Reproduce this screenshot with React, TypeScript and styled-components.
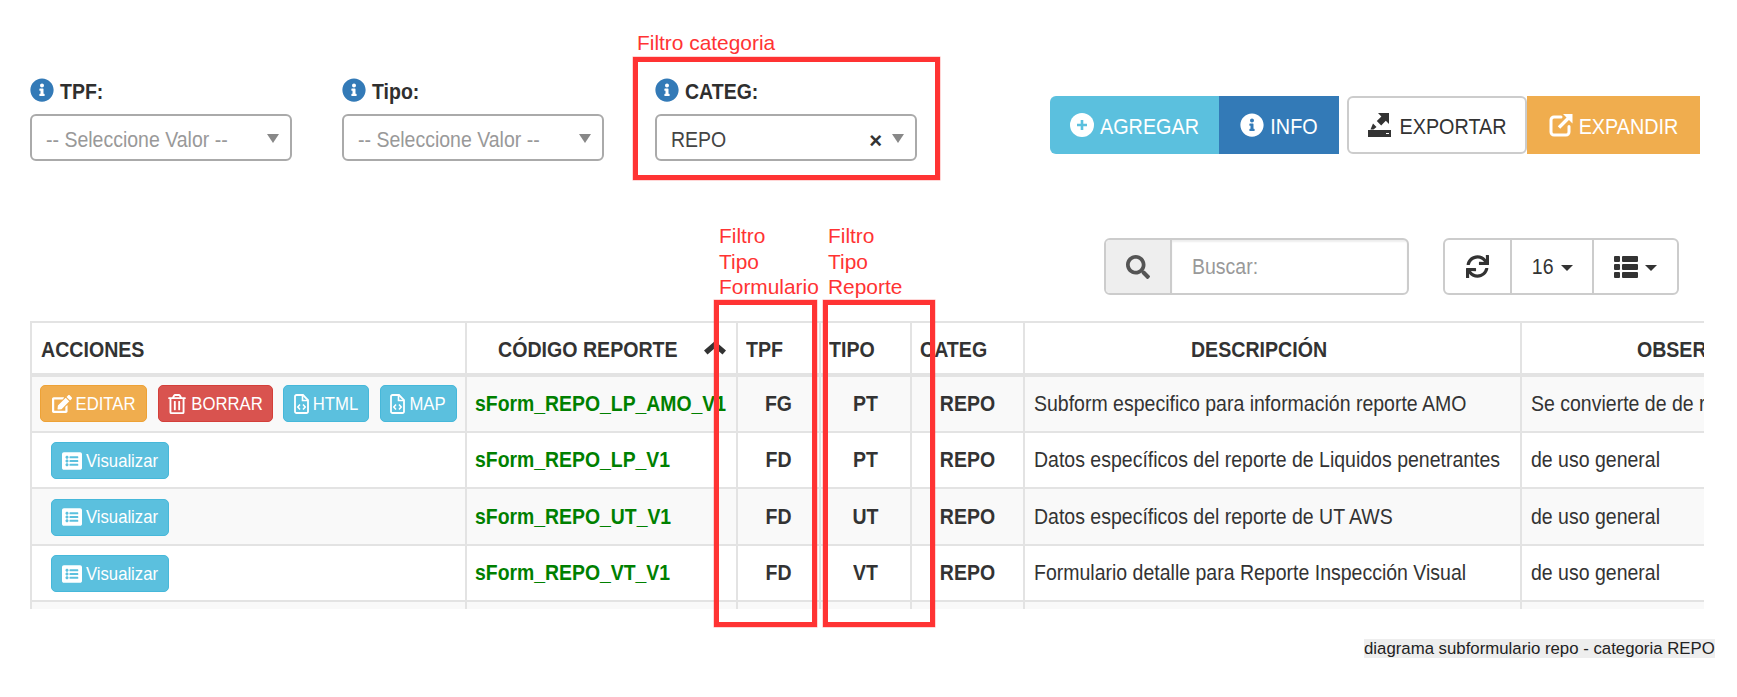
import React from "react";
import styled, { createGlobalStyle, css } from "styled-components";
import { FaInfoCircle, FaSearch, FaSync, FaEdit, FaRegTrashAlt, FaListAlt } from "react-icons/fa";

const Global = createGlobalStyle`
  html, body { margin: 0; padding: 0; background: #fff; }
  body { font-family: "Liberation Sans", Arial, sans-serif; color: #333; width: 1737px; height: 697px; overflow: hidden; }
  * { box-sizing: border-box; }
`;

const tall = (drop = 0) => css`
  display: inline-block;
  transform: translateY(${drop}px) scaleY(1.15);
`;

const Page = styled.div`
  position: relative;
  width: 1737px;
  height: 697px;
  padding-top: 77px;
`;

const TopBar = styled.div`
  display: flex;
  align-items: flex-start;
  padding-left: 30px;
  height: 161px;
`;

const Filter = styled.div<{ $w: number }>`
  width: 262px;
  margin-right: ${p => p.$w}px;
  flex: none;
`;

const FilterLabel = styled.div`
  display: flex;
  align-items: center;
  gap: 6px;
  height: 24px;
  margin-bottom: 13px;
  color: #2f2f2f;
  font-size: 19.5px;
  font-weight: 700;
  svg { color: #337ab7; font-size: 24px; flex: none; margin-top: 1px; }
  span { ${tall(2)} }
`;

const SelectBox = styled.div`
  height: 47px;
  border: 2px solid #aaa;
  border-radius: 6px;
  display: flex;
  align-items: center;
  padding: 0 11px 0 14px;
  background: #fff;
`;

const SelectText = styled.span<{ $placeholder?: boolean }>`
  ${tall(2)}
  flex: 1;
  font-size: 19.5px;
  color: ${p => (p.$placeholder ? "#999" : "#444")};
`;

const ClearMark = styled.span`
  font-size: 22px;
  font-weight: 700;
  color: #333;
  margin: 7px 10px 0 0;
`;

const Arrow = styled.span`
  width: 0;
  height: 0;
  border-left: 6.5px solid transparent;
  border-right: 6.5px solid transparent;
  border-top: 9px solid #888;
  margin-top: 1px;
`;

const Actions = styled.div`
  display: flex;
  margin: 19px 0 0 133px;
  height: 58px;
`;

const ActionButton = styled.div<{ $bg: string; $fg?: string; $w: number; $radius?: string; $border?: string; $gap?: number }>`
  width: ${p => p.$w}px;
  height: 58px;
  display: flex;
  align-items: center;
  justify-content: center;
  gap: ${p => p.$gap ?? 6}px;
  background: ${p => p.$bg};
  color: ${p => p.$fg ?? "#fff"};
  font-size: 19.8px;
  border-radius: ${p => p.$radius ?? "0"};
  border: ${p => p.$border ?? "none"};
  span { ${tall(1)} }
  svg { flex: none; font-size: 24px; }
`;

const ActionSpacer = styled.div`
  width: 8px;
`;

const ToolBar = styled.div`
  display: flex;
  justify-content: flex-end;
  padding-right: 58px;
  height: 83px;
`;

const SearchGroup = styled.div`
  display: flex;
  width: 305px;
  height: 57px;
  border: 2px solid #ccc;
  border-radius: 6px;
  overflow: hidden;
  margin-right: 34px;
`;

const SearchAddon = styled.div`
  width: 66px;
  background: #eee;
  border-right: 2px solid #ccc;
  display: flex;
  align-items: center;
  justify-content: center;
  color: #555;
  font-size: 24px;
`;

const SearchField = styled.div`
  flex: 1;
  display: flex;
  align-items: center;
  padding-left: 20px;
  box-shadow: inset 0 2px 2px rgba(0, 0, 0, 0.07);
  span { ${tall()} color: #999; font-size: 19.5px; }
`;

const ToolGroup = styled.div`
  display: flex;
  width: 236px;
  height: 57px;
  border: 2px solid #ccc;
  border-radius: 6px;
  overflow: hidden;
`;

const ToolCell = styled.div<{ $w: number }>`
  width: ${p => p.$w}px;
  display: flex;
  align-items: center;
  justify-content: center;
  gap: 7px;
  color: #333;
  font-size: 19.5px;
  & + & { border-left: 2px solid #ccc; }
  span { ${tall()} }
  svg { font-size: 23px; flex: none; }
`;

const Caret = styled.i`
  width: 0;
  height: 0;
  border-left: 6px solid transparent;
  border-right: 6px solid transparent;
  border-top: 6px solid #333;
  margin-top: 2px;
`;

const TableClip = styled.div`
  margin-left: 30px;
  width: 1674px;
  height: 288px;
  overflow: hidden;
`;

const Table = styled.table`
  border-collapse: collapse;
  table-layout: fixed;
  width: 1892px;
  font-size: 19.5px;
`;

const HeadCell = styled.th<{ $align?: string; $pl?: number; $pr?: number }>`
  height: 53px;
  border: 2px solid #e3e3e3;
  border-bottom-width: 4px;
  font-size: 19.6px;
  font-weight: 700;
  color: #333;
  text-align: ${p => p.$align ?? "center"};
  padding: 2px ${p => p.$pr ?? 0}px 0 ${p => p.$pl ?? 0}px;
  white-space: nowrap;
  position: relative;
  span { ${tall()} }
`;

const SortMark = styled.svg`
  position: absolute;
  right: 10px;
  top: 18px;
  width: 22px;
  height: 14px;
  fill: #333;
`;

const Row = styled.tr<{ $odd: boolean }>`
  background: ${p => (p.$odd ? "#f9f9f9" : "#fff")};
`;

const Cell = styled.td<{ $align?: string; $bold?: boolean; $pl?: number }>`
  height: 56.5px;
  border: 2px solid #e3e3e3;
  text-align: ${p => p.$align ?? "left"};
  font-weight: ${p => (p.$bold ? 700 : 400)};
  color: #333;
  padding: 0 0 0 ${p => p.$pl ?? 9}px;
  white-space: nowrap;
  overflow: hidden;
  span { ${tall()} }
`;

const ButtonRow = styled.div<{ $pl: number; $pt?: number }>`
  display: flex;
  gap: 10.5px;
  padding: ${p => p.$pt ?? 0}px 0 0 ${p => p.$pl}px;
`;

const RowButton = styled.div<{ $bg: string; $bd: string; $w: number }>`
  width: ${p => p.$w}px;
  height: 37px;
  display: flex;
  align-items: center;
  justify-content: center;
  gap: 4px;
  background: ${p => p.$bg};
  border: 1px solid ${p => p.$bd};
  border-radius: 5px;
  color: #fff;
  font-size: 16.7px;
  font-weight: 400;
  svg { font-size: 20px; flex: none; }
`;

const Code = styled.span`
  color: #008000;
  font-weight: 700;
  font-size: 19.4px;
`;

const Note = styled.div<{ $x: number; $y: number }>`
  position: absolute;
  left: ${p => p.$x}px;
  top: ${p => p.$y}px;
  color: #ff3333;
  font-size: 20.9px;
  line-height: 25.5px;
`;

const Frame = styled.div<{ $x: number; $y: number; $w: number; $h: number }>`
  position: absolute;
  left: ${p => p.$x}px;
  top: ${p => p.$y}px;
  width: ${p => p.$w}px;
  height: ${p => p.$h}px;
  border: 5px solid #ff3333;
  box-shadow: 0 0 0 0.5px rgba(255, 51, 51, 0.4);
`;

const Caption = styled.div`
  position: absolute;
  left: 1364px;
  top: 639px;
  height: 19px;
  line-height: 19px;
  background: #eee;
  color: #222;
  font-size: 16.8px;
  white-space: nowrap;
`;

const ExportIcon = () => (
  <svg width="24" height="24" viewBox="0 0 24 24" fill="#333">
    <path d="M0 17h23v7H0z" />
    <path d="M10 0h11v11l-3.2-3.2-4.6 4.6-4.4-4.4 4.6-4.6z" />
    <path d="M5 10.5l3.5 3.5-3 2.5H2.5z" />
    <rect x="18" y="20" width="3" height="1" fill="#fff" />
  </svg>
);

const ExpandIcon = () => (
  <svg width="24" height="24" viewBox="0 0 24 24">
    <path d="M20 13.5V19a3 3 0 0 1-3 3H5a3 3 0 0 1-3-3V7a3 3 0 0 1 3-3h7" fill="none" stroke="#fff" strokeWidth="3" strokeLinecap="round" />
    <path d="M10 14.5 19.5 5" fill="none" stroke="#fff" strokeWidth="3.4" />
    <path d="M14 1h9.5v9.5z" fill="#fff" />
  </svg>
);

const PlusIcon = () => (
  <svg width="24" height="24" viewBox="0 0 24 24">
    <circle cx="12" cy="12" r="12" fill="#fff" />
    <path d="M10.7 7h2.6v3.7H17v2.6h-3.7V17h-2.6v-3.7H7v-2.6h3.7z" fill="#5bc0de" />
  </svg>
);

const RowsIcon = () => (
  <svg width="24" height="22" viewBox="0 0 24 22" fill="#333">
    <rect x="0" y="0" width="6" height="6" rx="1" />
    <rect x="8" y="0" width="16" height="6" rx="1" />
    <rect x="0" y="8" width="6" height="6" rx="1" />
    <rect x="8" y="8" width="16" height="6" rx="1" />
    <rect x="0" y="16" width="6" height="6" rx="1" />
    <rect x="8" y="16" width="16" height="6" rx="1" />
  </svg>
);

const FileCodeIcon = () => (
  <svg width="15" height="20" viewBox="0 0 15 20" fill="none" stroke="#fff">
    <path d="M2.5 1H9l5 5v11.5a1.5 1.5 0 0 1-1.5 1.5h-10A1.5 1.5 0 0 1 1 17.500v-15A1.500 1.500 0 0 1 2.500 1z" strokeWidth="1.8" />
    <path d="M8.500 1.500V6.500h5" strokeWidth="1.600" />
    <path d="M6 10.500 3.800 13 6 15.500M9 10.500l2.200 2.500L9 15.500" strokeWidth="1.600" />
  </svg>
);

const rows = [
  { code: "sForm_REPO_LP_AMO_V1", tpf: "FG", tipo: "PT", desc: "Subform especifico para información reporte AMO", obs: "Se convierte de de reporte a subform" },
  { code: "sForm_REPO_LP_V1", tpf: "FD", tipo: "PT", desc: "Datos específicos del reporte de Liquidos penetrantes", obs: "de uso general" },
  { code: "sForm_REPO_UT_V1", tpf: "FD", tipo: "UT", desc: "Datos específicos del reporte de UT AWS", obs: "de uso general" },
  { code: "sForm_REPO_VT_V1", tpf: "FD", tipo: "VT", desc: "Formulario detalle para Reporte Inspección Visual", obs: "de uso general" },
];

export default function App() {
  return (
    <Page>
      <Global />
      <TopBar>
        <Filter $w={50}>
          <FilterLabel><FaInfoCircle /><span>TPF:</span></FilterLabel>
          <SelectBox><SelectText $placeholder>-- Seleccione Valor --</SelectText><Arrow /></SelectBox>
        </Filter>
        <Filter $w={51}>
          <FilterLabel><FaInfoCircle /><span>Tipo:</span></FilterLabel>
          <SelectBox><SelectText $placeholder>-- Seleccione Valor --</SelectText><Arrow /></SelectBox>
        </Filter>
        <Filter $w={0}>
          <FilterLabel><FaInfoCircle /><span>CATEG:</span></FilterLabel>
          <SelectBox><SelectText>REPO</SelectText><ClearMark>×</ClearMark><Arrow /></SelectBox>
        </Filter>
        <Actions>
          <ActionButton $bg="#5bc0de" $w={169} $radius="6px 0 0 6px"><PlusIcon /><span>AGREGAR</span></ActionButton>
          <ActionButton $bg="#337ab7" $w={120}><FaInfoCircle /><span>INFO</span></ActionButton>
          <ActionSpacer />
          <ActionButton $bg="#fff" $fg="#333" $w={180} $radius="6px" $border="2px solid #ccc" $gap={8}><ExportIcon /><span>EXPORTAR</span></ActionButton>
          <ActionButton $bg="#f0ad4e" $w={173}><ExpandIcon /><span>EXPANDIR</span></ActionButton>
        </Actions>
      </TopBar>
      <ToolBar>
        <SearchGroup>
          <SearchAddon><FaSearch /></SearchAddon>
          <SearchField><span>Buscar:</span></SearchField>
        </SearchGroup>
        <ToolGroup>
          <ToolCell $w={66}><FaSync /></ToolCell>
          <ToolCell $w={84}><span>16</span><Caret /></ToolCell>
          <ToolCell $w={86}><RowsIcon /><Caret /></ToolCell>
        </ToolGroup>
      </ToolBar>
      <TableClip>
        <Table>
          <colgroup>
            <col width={435} /><col width={271} /><col width={83} /><col width={91} /><col width={113} /><col width={497} /><col width={402} />
          </colgroup>
          <thead>
            <tr>
              <HeadCell $align="left" $pl={9}><span>ACCIONES</span></HeadCell>
              <HeadCell $align="left" $pl={31}>
                <span>CÓDIGO REPORTE</span>
                <SortMark viewBox="0 0 22 14"><path d="M11 0l11 9.500-3.500 4L11 7l-7.500 6.500-3.500-4z" /></SortMark>
              </HeadCell>
              <HeadCell $align="left" $pl={8}><span>TPF</span></HeadCell>
              <HeadCell $align="left" $pl={8}><span>TIPO</span></HeadCell>
              <HeadCell $align="left" $pl={8}><span>CATEG</span></HeadCell>
              <HeadCell $pr={27}><span>DESCRIPCIÓN</span></HeadCell>
              <HeadCell><span>OBSERVACIONES</span></HeadCell>
            </tr>
          </thead>
          <tbody>
            {rows.map((r, i) => (
              <Row key={r.code} $odd={i % 2 === 0}>
                <Cell $pl={0}>
                  {i === 0 ? (
                    <ButtonRow $pl={8}>
                      <RowButton $bg="#f0ad4e" $bd="#eea236" $w={107}><FaEdit /><span>EDITAR</span></RowButton>
                      <RowButton $bg="#d9534f" $bd="#d43f3a" $w={115}><FaRegTrashAlt /><span>BORRAR</span></RowButton>
                      <RowButton $bg="#5bc0de" $bd="#46b8da" $w={86}><FileCodeIcon /><span>HTML</span></RowButton>
                      <RowButton $bg="#5bc0de" $bd="#46b8da" $w={77}><FileCodeIcon /><span>MAP</span></RowButton>
                    </ButtonRow>
                  ) : (
                    <ButtonRow $pl={19} $pt={2}>
                      <RowButton $bg="#5bc0de" $bd="#46b8da" $w={118}><FaListAlt /><span>Visualizar</span></RowButton>
                    </ButtonRow>
                  )}
                </Cell>
                <Cell $pl={8}><Code>{r.code}</Code></Cell>
                <Cell $align="center" $bold $pl={0}><span>{r.tpf}</span></Cell>
                <Cell $align="center" $bold $pl={0}><span>{r.tipo}</span></Cell>
                <Cell $align="center" $bold $pl={0}><span>REPO</span></Cell>
                <Cell><span>{r.desc}</span></Cell>
                <Cell><span>{r.obs}</span></Cell>
              </Row>
            ))}
            <Row $odd>
              <Cell /><Cell /><Cell /><Cell /><Cell /><Cell /><Cell />
            </Row>
          </tbody>
        </Table>
      </TableClip>
      <Note $x={637} $y={30}>Filtro categoria</Note>
      <Frame $x={633} $y={57} $w={307} $h={123} />
      <Note $x={719} $y={223}>Filtro<br />Tipo<br />Formulario</Note>
      <Note $x={828} $y={223}>Filtro<br />Tipo<br />Reporte</Note>
      <Frame $x={714} $y={300} $w={103} $h={327} />
      <Frame $x={823} $y={300} $w={112} $h={327} />
      <Caption>diagrama subformulario repo - categoria REPO</Caption>
    </Page>
  );
}
